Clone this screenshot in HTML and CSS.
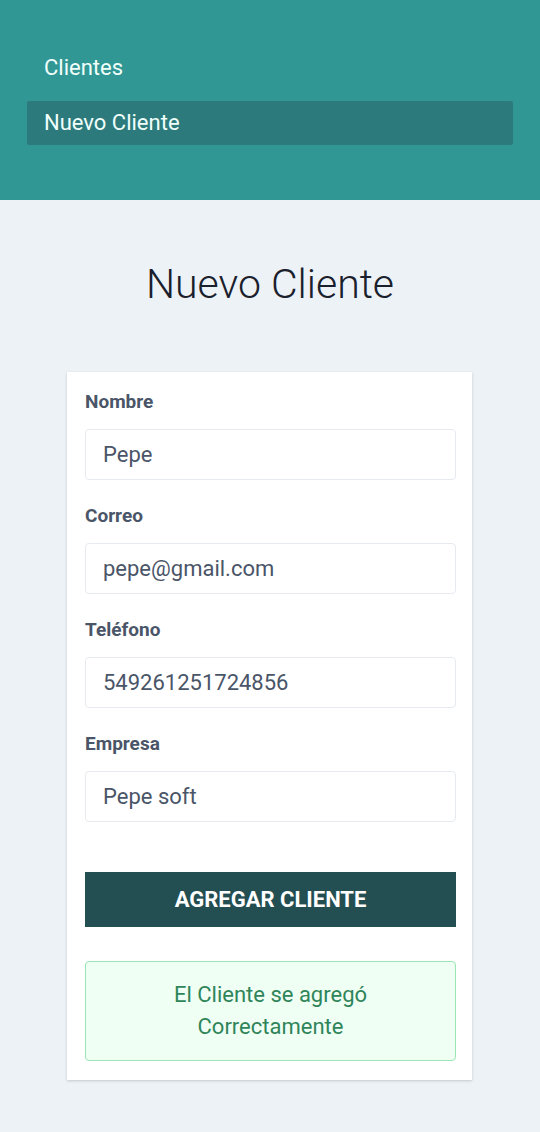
FILE: index.html
```html
<!DOCTYPE html>
<html lang="es">
<head>
<meta charset="utf-8">
<title>Nuevo Cliente</title>
<link rel="stylesheet" href="styles.css">
</head>
<body>
<header class="header">
  <nav class="nav">
    <a class="nav-item" href="#">Clientes</a>
    <a class="nav-item active" href="#">Nuevo Cliente</a>
  </nav>
</header>
<main class="main">
  <h1 class="title">Nuevo Cliente</h1>
  <form class="card">
    <div class="field">
      <label class="label">Nombre</label>
      <div class="input">Pepe</div>
    </div>
    <div class="field">
      <label class="label">Correo</label>
      <div class="input">pepe@gmail.com</div>
    </div>
    <div class="field">
      <label class="label">Teléfono</label>
      <div class="input">549261251724856</div>
    </div>
    <div class="field">
      <label class="label">Empresa</label>
      <div class="input">Pepe soft</div>
    </div>
    <button class="btn" type="button">Agregar Cliente</button>
    <div class="alert">El Cliente se agregó<br>Correctamente</div>
  </form>
</main>
</body>
</html>
```
FILE: styles.css
```css
* { box-sizing: border-box; }
html, body { margin: 0; padding: 0; }
body {
  font-family: Roboto, "Liberation Sans", sans-serif;
  background: #edf2f7;
  min-height: 1132px;
}
.header {
  background: #319795;
  height: 200px;
  padding: 46px 27px 0 27px;
}
.nav {
  display: flex;
  flex-direction: column;
  gap: 11px;
}
.nav-item {
  display: block;
  height: 44px;
  line-height: 44px;
  padding: 0 17px;
  font-size: 22px;
  color: #f0fffb;
  text-decoration: none;
  border-radius: 2px;
}
.nav-item.active { background: #2c7a7b; }
.main {
  padding-top: 60px;
  padding-bottom: 52px;
}
.title {
  margin: 0;
  text-align: center;
  font-size: 41px;
  line-height: 48px;
  font-weight: 300;
  color: #1a202c;
}
.card {
  width: 405px;
  margin: 64px auto 0 67px;
  background: #fff;
  padding: 18px 16px 19px 18px;
  box-shadow: 0 1px 3px rgba(0,0,0,0.12), 0 1px 2px rgba(0,0,0,0.06);
  display: flex;
  flex-direction: column;
}
.field {
  display: flex;
  flex-direction: column;
  margin-bottom: 24px;
}
.label {
  font-size: 19px;
  line-height: 24px;
  font-weight: 700;
  color: #4a5568;
  margin-bottom: 15px;
}
.input {
  height: 51px;
  border: 1px solid #e6eaef;
  border-radius: 4px;
  padding: 0 17px;
  font-size: 22px;
  line-height: 49px;
  color: #4a5568;
}
.btn {
  margin-top: 26px;
  height: 55px;
  border: none;
  background: #234e52;
  color: #fff;
  font-family: Roboto, "Liberation Sans", sans-serif;
  font-size: 22px;
  font-weight: 700;
  text-transform: uppercase;
  cursor: pointer;
}
.alert {
  margin-top: 34px;
  height: 100px;
  border: 1px solid #9ae6b4;
  border-radius: 4px;
  background: #f0fff4;
  color: #2f855a;
  font-size: 22px;
  line-height: 32px;
  text-align: center;
  display: flex;
  align-items: center;
  justify-content: center;
}
```
